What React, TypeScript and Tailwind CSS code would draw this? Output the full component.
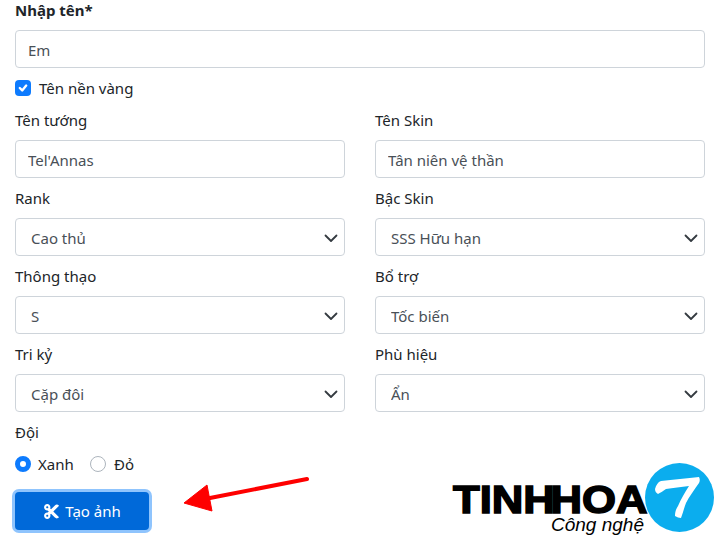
import { FaCut } from "react-icons/fa";

const inputClass =
  "block w-full h-[38px] px-3 pt-[2px] bg-white border border-[#ced4da] rounded-[4px] text-[#495057] outline-none";

function TextField({ label, value }: { label: string; value: string }) {
  return (
    <div className="mb-2">
      <label className="block mb-2 h-6 leading-6">{label}</label>
      <input readOnly defaultValue={value} className={inputClass} />
    </div>
  );
}

function SelectField({ label, value }: { label: string; value: string }) {
  return (
    <div className="mb-2">
      <label className="block mb-2 h-6 leading-6">{label}</label>
      <div className="relative">
        <select defaultValue={value} className={inputClass + " appearance-none pl-[15px]"}>
          <option>{value}</option>
        </select>
        <svg viewBox="0 0 16 16" className="absolute right-[6px] top-3 w-4 h-4" fill="none" stroke="#343a40" strokeWidth="1.8" strokeLinecap="round" strokeLinejoin="round" aria-hidden>
          <path d="M2.5 5.5l5.5 5.5 5.5-5.5" />
        </svg>
      </div>
    </div>
  );
}

function Logo() {
  return (
    <div className="absolute left-[452px] top-[463px] w-[264px] h-[72px]" aria-hidden>
      <span className="absolute left-[1px] top-[22px] origin-left scale-x-[1.12] whitespace-nowrap text-[39px] leading-[30px] font-bold text-black font-['Liberation_Sans',sans-serif] [-webkit-text-stroke:1.5px_black]">
        TINH<span className="-ml-[4px]">HOA</span>
      </span>
      <span className="absolute left-[99px] top-[52px] text-[19px] leading-[20px] italic text-black font-['Liberation_Sans',sans-serif]">
        Công nghệ
      </span>
      <svg viewBox="0 0 69 69" className="absolute left-[193px] top-0 w-[69px] h-[69px]">
        <circle cx="34.5" cy="34.5" r="34.5" fill="#0badee" />
        <path d="M10 26 C11 22 13 19 16 18 C28 17 42 15 54 14 C55 16 55 18 54 20 C49 27 44 34 41 40 C39 45 38 50 36 55 C34 55 32 54 30 53 C30 49 31 46 33 43 C36 36 40 29 44 23 C36 24 28 25 21 26 C18 28 15 30 13 31 C11 30 10 28 10 26 Z" fill="#fff" />
      </svg>
    </div>
  );
}

export default function App() {
  return (
    <div className="relative h-[542px] overflow-hidden bg-white pl-[15px] pr-[11px] text-[15px] text-[#212529] font-['Noto_Sans','Open_Sans',sans-serif]">
      <label className="block h-6 -mt-[2px] mb-2 font-bold leading-6">Nhập tên*</label>
      <input readOnly defaultValue="Em" className={inputClass} />
      <div className="flex items-center gap-2 mt-2 mb-2 h-6">
        <span className="flex items-center justify-center w-4 h-4 rounded-[4px] bg-[#0d7bfe]">
          <svg viewBox="0 0 20 20" className="w-4 h-4" fill="none" stroke="#fff" strokeWidth="3" strokeLinecap="round" strokeLinejoin="round">
            <path d="M6 10l3 3 5-6" />
          </svg>
        </span>
        <span>Tên nền vàng</span>
      </div>

      <div className="grid grid-cols-2 gap-x-[30px]">
        <TextField label="Tên tướng" value="Tel'Annas" />
        <TextField label="Tên Skin" value="Tân niên vệ thần" />
        <SelectField label="Rank" value="Cao thủ" />
        <SelectField label="Bậc Skin" value="SSS Hữu hạn" />
        <SelectField label="Thông thạo" value="S" />
        <SelectField label="Bổ trợ" value="Tốc biến" />
        <SelectField label="Tri kỷ" value="Cặp đôi" />
        <SelectField label="Phù hiệu" value="Ẩn" />
      </div>

      <div className="h-6 leading-6 mb-2">Đội</div>
      <div className="flex items-center h-6 mt-2">
        <span className="w-4 h-4 rounded-full border-[5px] border-[#0d7bfe] bg-white" />
        <span className="ml-[7px] w-[36px]">Xanh</span>
        <span className="ml-4 w-4 h-4 rounded-full border border-[#adb5bd] bg-white" />
        <span className="ml-2">Đỏ</span>
      </div>

      <button className="flex items-center justify-center gap-[5px] mt-4 w-[134px] h-[38px] rounded-[4px] bg-[#0069d9] text-white ring-[3px] ring-[#8fc4fd]">
        <FaCut className="w-[17px] h-[17px]" />
        Tạo ảnh
      </button>

      <svg viewBox="0 0 140 50" className="absolute left-[175px] top-[470px] w-[140px] h-[50px]" aria-hidden>
        <path d="M132 9 L35 28" stroke="#fe0000" strokeWidth="4" strokeLinecap="round" />
        <path d="M9 33 L32 15 L37 41 Z" fill="#fe0000" stroke="#fe0000" strokeLinejoin="round" />
      </svg>
      <Logo />
    </div>
  );
}
